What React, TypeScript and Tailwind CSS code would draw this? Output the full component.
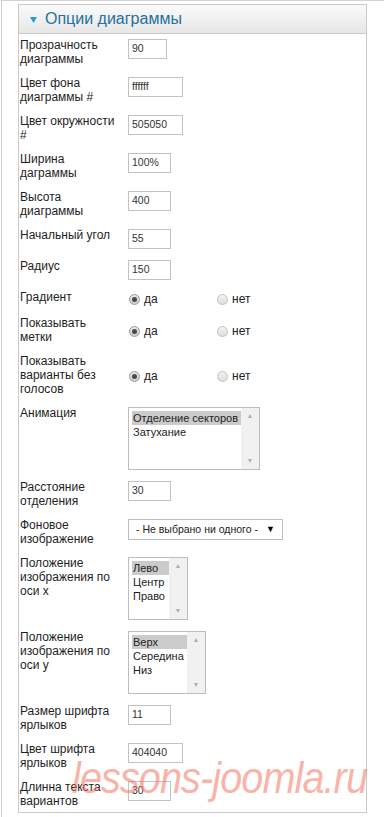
import React from "react";

const labelFont = { fontFamily: '"Liberation Sans", Arial, sans-serif' };

type Row = {
  label: string[];
  kind: "text" | "radio" | "list" | "select";
  value?: string;
  width?: string;
  options?: string[];
  listWidth?: string;
};

const rows: Row[] = [
  { label: ["Прозрачность", "диаграммы"], kind: "text", value: "90", width: "w-[39px]" },
  { label: ["Цвет фона", "диаграммы #"], kind: "text", value: "ffffff", width: "w-[55px]" },
  { label: ["Цвет окружности", "#"], kind: "text", value: "505050", width: "w-[55px]" },
  { label: ["Ширина", "даграммы"], kind: "text", value: "100%", width: "w-[43px]" },
  { label: ["Высота", "диаграммы"], kind: "text", value: "400", width: "w-[43px]" },
  { label: ["Начальный угол"], kind: "text", value: "55", width: "w-[43px]" },
  { label: ["Радиус"], kind: "text", value: "150", width: "w-[43px]" },
  { label: ["Градиент"], kind: "radio" },
  { label: ["Показывать", "метки"], kind: "radio" },
  { label: ["Показывать", "варианты без", "голосов"], kind: "radio" },
  {
    label: ["Анимация"],
    kind: "list",
    options: ["Отделение секторов", "Затухание"],
    listWidth: "w-[132px]",
  },
  { label: ["Расстояние", "отделения"], kind: "text", value: "30", width: "w-[43px]" },
  { label: ["Фоновое", "изображение"], kind: "select" },
  {
    label: ["Положение", "изображения по", "оси x"],
    kind: "list",
    options: ["Лево", "Центр", "Право"],
    listWidth: "w-[60px]",
  },
  {
    label: ["Положение", "изображения по", "оси y"],
    kind: "list",
    options: ["Верх", "Середина", "Низ"],
    listWidth: "w-[78px]",
  },
  { label: ["Размер шрифта", "ярлыков"], kind: "text", value: "11", width: "w-[43px]" },
  { label: ["Цвет шрифта", "ярлыков"], kind: "text", value: "404040", width: "w-[55px]" },
  { label: ["Длинна текста", "вариантов"], kind: "text", value: "30", width: "w-[43px]" },
];

const Radio = ({ checked }: { checked?: boolean }) => (
  <span
    className={`flex h-[11px] w-[11px] items-center justify-center rounded-full border ${
      checked
        ? "border-[#9a9a9a] bg-gradient-to-b from-[#e6e6e6] to-[#cfcfcf]"
        : "border-[#c4c4c4] bg-gradient-to-b from-[#f2f2f2] to-[#dedede]"
    }`}
  >
    {checked && <span className="h-[5px] w-[5px] rounded-full bg-[#4a4a4a]" />}
  </span>
);

const Control = ({ row }: { row: Row }) => {
  if (row.kind === "text") {
    return (
      <div
        className={`mt-px flex h-[20px] items-center border border-[#c2c2c2] bg-white pl-[3px] text-[10.5px] text-[#333] ${row.width}`}
      >
        {row.value}
      </div>
    );
  }
  if (row.kind === "radio") {
    return (
      <div className="flex items-center pt-[2px] text-[12px] leading-[14px] text-[#222]">
        <div className="flex w-[89px] items-center">
          <span className="ml-px">
            <Radio checked />
          </span>
          <span className="ml-[4px]">да</span>
        </div>
        <div className="flex items-center">
          <Radio />
          <span className="ml-[4px]">нет</span>
        </div>
      </div>
    );
  }
  if (row.kind === "select") {
    return (
      <div className="mt-px flex h-[21px] w-[155px] items-center justify-between border border-[#bdbdbd] bg-white pl-[7px] pr-[7px] text-[10.5px] text-[#222]">
        <span>- Не выбрано ни одного -</span>
        <span className="text-[9px] text-black">▼</span>
      </div>
    );
  }
  return (
    <div
      className={`mt-px flex h-[63px] border border-[#bdbdbd] bg-white ${row.listWidth}`}
    >
      <div className="flex-1 pl-[3px] pt-[3px] text-[11px] leading-[14px] text-[#222]">
        {row.options!.map((o, i) => (
          <div
            key={o}
            className={`whitespace-nowrap pl-px ${i === 0 ? "bg-[#cbcbcb]" : ""}`}
          >
            {o}
          </div>
        ))}
      </div>
      <div className="flex w-[18px] flex-col items-center justify-between bg-[#f1f1f1] py-[4px] text-[7px] leading-[8px] text-[#b0b0b0]">
        <span>▲</span>
        <span>▼</span>
      </div>
    </div>
  );
};

export default function App() {
  return (
    <div className="relative min-h-[817px] overflow-hidden bg-white" style={labelFont}>
      <div className="ml-px h-[817px] border-l border-t border-[#d2d2d2] pt-[3px]">
        <div className="ml-[16px] w-[349px] border border-[#cacaca]">
          <div className="flex h-[29px] items-center border-b border-[#c9c9c9] bg-gradient-to-b from-[#fafafa] to-[#e7e7e7] pl-[11px]">
            <svg width="7" height="6" viewBox="0 0 7 6" className="mr-[8px] mt-px">
              <path d="M0 0 L7 0 L3.5 6 Z" fill="#2d9ad6" />
            </svg>
            <span className="text-[16px] text-[#24709e]">Опции диаграммы</span>
          </div>
          <div className="flex flex-col gap-[10px] pb-[4px] pl-px pt-[4px]">
            {rows.map((row, i) => (
              <div key={i} className="flex">
                <div className="w-[108px] shrink-0 whitespace-nowrap text-[12px] leading-[14px] text-[#1e1e1e]">
                  {row.label.map((l, j) => (
                    <div key={j}>{l}</div>
                  ))}
                </div>
                <Control row={row} />
              </div>
            ))}
          </div>
        </div>
      </div>
      <div className="pointer-events-none absolute left-[72px] top-[756px] origin-left scale-x-[0.9] whitespace-nowrap text-[44px] italic leading-[44px] tracking-[-1px] text-[#f6705c]/55">
        lessons-joomla.ru
      </div>
    </div>
  );
}
